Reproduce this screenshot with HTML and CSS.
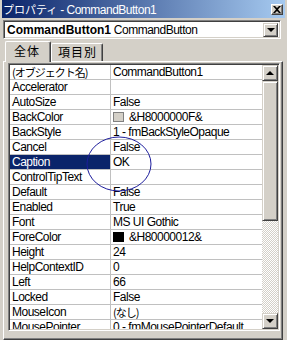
FILE: index.html
```html
<!DOCTYPE html>
<html lang="ja">
<head>
    <meta charset="UTF-8">
    <title>プロパティ - CommandButton1</title>
    <link rel="stylesheet" href="styles.css">
</head>
<body>
    <div class="window">
        <div class="titlebar">
            <span class="title"><span class="jp">プロパティ</span> - CommandButton1</span>
            <span class="close-btn">
                <svg width="8" height="7" viewBox="0 0 8 7"><path d="M0 0h2l2 2 2-2h2L5 3.5 8 7H6L4 5 2 7H0l3-3.5z" fill="#000"/></svg>
            </span>
        </div>

        <div class="combo">
            <span class="combo-text"><b>CommandButton1</b> CommandButton</span>
            <span class="btn3d combo-btn"><span class="arrow-down"></span></span>
        </div>

        <div class="tabs">
            <div class="tab active">全体</div>
            <div class="tab">項目別</div>
        </div>

        <div class="panel">
            <div class="grid">
                <div class="rows">
                    <div class="row"><div class="name"><span class="jp-tight">(オブジェクト名)</span></div><div class="value">CommandButton1</div></div>
                    <div class="row"><div class="name">Accelerator</div><div class="value"></div></div>
                    <div class="row"><div class="name">AutoSize</div><div class="value">False</div></div>
                    <div class="row"><div class="name">BackColor</div><div class="value"><span class="swatch swatch-gray"></span>&amp;H8000000F&amp;</div></div>
                    <div class="row"><div class="name">BackStyle</div><div class="value">1 - fmBackStyleOpaque</div></div>
                    <div class="row"><div class="name">Cancel</div><div class="value">False</div></div>
                    <div class="row selected"><div class="name">Caption</div><div class="value">OK</div></div>
                    <div class="row"><div class="name">ControlTipText</div><div class="value"></div></div>
                    <div class="row"><div class="name">Default</div><div class="value">False</div></div>
                    <div class="row"><div class="name">Enabled</div><div class="value">True</div></div>
                    <div class="row"><div class="name">Font</div><div class="value">MS UI Gothic</div></div>
                    <div class="row"><div class="name">ForeColor</div><div class="value"><span class="swatch swatch-black"></span>&amp;H80000012&amp;</div></div>
                    <div class="row"><div class="name">Height</div><div class="value">24</div></div>
                    <div class="row"><div class="name">HelpContextID</div><div class="value">0</div></div>
                    <div class="row"><div class="name">Left</div><div class="value">66</div></div>
                    <div class="row"><div class="name">Locked</div><div class="value">False</div></div>
                    <div class="row"><div class="name">MouseIcon</div><div class="value"><span class="jp-tight">(なし)</span></div></div>
                    <div class="row"><div class="name">MousePointer</div><div class="value">0 - fmMousePointerDefault</div></div>
                </div>
                <div class="scrollbar">
                    <span class="btn3d scroll-btn"><span class="arrow-up"></span></span>
                    <span class="btn3d thumb"></span>
                    <span class="track"></span>
                    <span class="btn3d scroll-btn"><span class="arrow-down"></span></span>
                </div>
            </div>
        </div>

        <!-- hand-drawn mark around the Caption value -->
        <svg class="mark" width="287" height="340" viewBox="0 0 287 340">
            <ellipse cx="119" cy="164" rx="32" ry="27" fill="none" stroke="#1c1c9c" stroke-width="1"/>
        </svg>
    </div>
</body>
</html>
```

FILE: styles.css
```css
* {
    margin: 0;
    padding: 0;
    box-sizing: border-box;
}

body {
    width: 287px;
    height: 340px;
    overflow: hidden;
    background-color: #d4d0c8;
    font-family: "Liberation Sans", "Noto Sans CJK JP", sans-serif;
    font-size: 12px;
    letter-spacing: -0.5px;
    color: #000;
}

.window {
    position: relative;
    width: 287px;
    height: 340px;
    padding: 0 2px;
    background-color: #d4d0c8;
}

.jp {
    font-family: "Noto Sans CJK JP", sans-serif;
    font-size: 11px;
    letter-spacing: 0;
}

.jp-tight {
    font-family: "Noto Sans CJK JP", sans-serif;
    font-size: 11px;
    letter-spacing: -1px;
}

/* title bar */
.titlebar {
    height: 18px;
    display: flex;
    align-items: center;
    justify-content: space-between;
    padding: 0 2px 0 1px;
    background: linear-gradient(to right, #0a246a, #a6caf0);
    color: #fff;
    line-height: 18px;
}

.close-btn {
    width: 12px;
    height: 11px;
    display: flex;
    align-items: center;
    justify-content: center;
    background-color: #d4d0c8;
    border: 1px solid;
    border-color: #fff #404040 #404040 #fff;
    box-shadow: inset -1px -1px #808080;
}

/* combo box */
.combo {
    height: 19px;
    margin: 2px 4px 0 1px;
    display: flex;
    align-items: center;
    justify-content: space-between;
    background-color: #fff;
    border: 1px solid;
    border-color: #808080 #fff #fff #808080;
    box-shadow: inset 1px 1px #404040, inset -1px -1px #d4d0c8;
    padding: 0 2px 0 3px;
}

.combo-text b {
    letter-spacing: 0;
}

.btn3d {
    display: flex;
    align-items: center;
    justify-content: center;
    background-color: #d4d0c8;
    border: 1px solid;
    border-color: #d4d0c8 #404040 #404040 #d4d0c8;
    box-shadow: inset 1px 1px #fff, inset -1px -1px #808080;
}

.combo-btn {
    width: 15px;
    height: 14px;
}

.arrow-down {
    width: 0;
    height: 0;
    border-left: 4px solid transparent;
    border-right: 4px solid transparent;
    border-top: 4px solid #000;
}

.arrow-up {
    width: 0;
    height: 0;
    border-left: 4px solid transparent;
    border-right: 4px solid transparent;
    border-bottom: 4px solid #000;
}

/* tabs */
.tabs {
    height: 20px;
    margin-top: 2px;
    padding-left: 3px;
    display: flex;
    align-items: flex-end;
    position: relative;
    z-index: 1;
}

.tab {
    height: 18px;
    padding: 0 5px 0 6px;
    font-family: "Noto Sans CJK JP", sans-serif;
    font-size: 12px;
    letter-spacing: 1px;
    line-height: 16px;
    border: 1px solid;
    border-bottom: none;
    border-color: #fff #404040 #404040 #fff;
    border-radius: 2px 2px 0 0;
    box-shadow: inset -1px 0 #808080;
}

.tab.active {
    height: 21px;
    margin-bottom: -1px;
    padding: 1px 10px 0 8px;
    background-color: #d4d0c8;
}

/* tab panel */
.panel {
    height: 279px;
    margin: 0 2px 0 1px;
    padding: 1px 2px 0 4px;
    border: 1px solid;
    border-color: #fff #404040 #404040 #fff;
    box-shadow: inset -1px -1px #808080;
}

.grid {
    height: 268px;
    display: flex;
    border: 1px solid;
    border-color: #808080 #fff #fff #808080;
    box-shadow: inset 1px 1px #404040, inset -1px -1px #d4d0c8;
    padding: 1px;
}

.rows {
    flex: 1;
    height: 264px;
    overflow: hidden;
    background-color: #fff;
}

.row {
    height: 15px;
    display: grid;
    grid-template-columns: 101px 1fr;
    border-bottom: 1px solid #c0c0c0;
    line-height: 14px;
}

.name {
    padding-left: 2px;
    border-right: 1px solid #c0c0c0;
    white-space: nowrap;
    overflow: hidden;
}

.value {
    padding-left: 2px;
    display: flex;
    align-items: center;
    white-space: nowrap;
    overflow: hidden;
}

.row.selected .name {
    background-color: #0a246a;
    color: #fff;
}

.swatch {
    width: 11px;
    height: 10px;
    margin-right: 5px;
    border: 1px solid #000;
}

.swatch-gray {
    background-color: #d4d0c8;
    border-color: #808080;
}

.swatch-black {
    background-color: #000;
}

/* scrollbar */
.scrollbar {
    width: 16px;
    height: 264px;
    display: flex;
    flex-direction: column;
}

.scroll-btn {
    width: 16px;
    height: 16px;
    flex: none;
}

.thumb {
    width: 16px;
    height: 140px;
    flex: none;
}

.track {
    flex: 1;
    background: repeating-conic-gradient(#fff 0 25%, #d4d0c8 0 50%) 0 0 / 2px 2px;
}

.mark {
    position: absolute;
    left: 0;
    top: 0;
    pointer-events: none;
}
```
